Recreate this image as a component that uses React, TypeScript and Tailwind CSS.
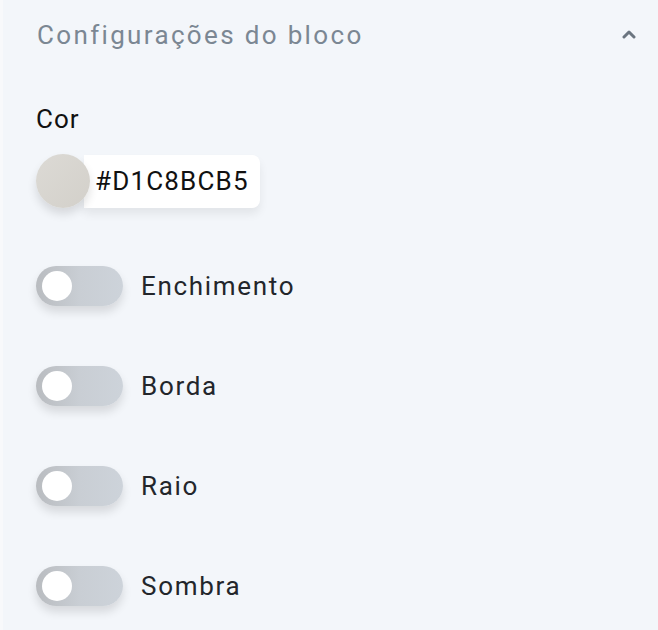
import React, { useState } from 'react';

const Toggle = ({ label }: { label: string }) => {
  const [on, setOn] = useState(false);
  return (
    <div className="flex items-center h-[100px]">
      <button
        onClick={() => setOn(!on)}
        className="relative w-[87px] h-[40px] rounded-full bg-gradient-to-r from-[#b9bcc0] via-[#c9ced4] to-[#cdd3da] shadow-[0_6px_10px_rgba(0,0,0,0.12)] shrink-0"
      >
        <span className="absolute left-[6px] top-[5px] w-[30px] h-[30px] rounded-full bg-white" />
      </button>
      <span className="ml-[18px] text-[26px] tracking-[0.065em] text-[#23262b]">{label}</span>
    </div>
  );
};

export default function App() {
  return (
    <div
      className="w-[658px] h-[630px] bg-[#f3f6fa] border-l-[3px] border-[#f8f9fb] overflow-hidden"
      style={{ fontFamily: 'Roboto, "Noto Sans", sans-serif' }}
    >
      <div className="flex items-center justify-between h-[70px] pl-[34px] pr-[22px]">
        <h2 className="text-[26px] tracking-[0.09em] text-[#7b8793]">Configurações do bloco</h2>
        <svg width="14" height="10" viewBox="0 0 14 10" className="mt-[-2px]">
          <path d="M2 8 L7 3 L12 8" fill="none" stroke="#6b7580" strokeWidth="3" strokeLinecap="round" strokeLinejoin="round" />
        </svg>
      </div>

      <div className="pl-[33px]">
        <p className="mt-[30px] text-[26px] tracking-[0.04em] text-[#111]">Cor</p>
        <div className="flex items-center mt-[15px]">
          <div className="relative z-10 w-[54px] h-[54px] rounded-full bg-gradient-to-br from-[#dcdad5] to-[#d3d0ca] shadow-[0_6px_10px_rgba(0,0,0,0.12)]" />
          <div className="ml-[-6px] h-[53px] w-[176px] bg-white rounded-r-lg shadow-[0_6px_10px_rgba(0,0,0,0.07)] flex items-center pl-[11px] text-[26px] tracking-[0.045em] text-[#111]">
            #D1C8BCB5
          </div>
        </div>
        <div className="mt-[28px]">
          <Toggle label="Enchimento" />
          <Toggle label="Borda" />
          <Toggle label="Raio" />
          <Toggle label="Sombra" />
        </div>
      </div>
    </div>
  );
}
